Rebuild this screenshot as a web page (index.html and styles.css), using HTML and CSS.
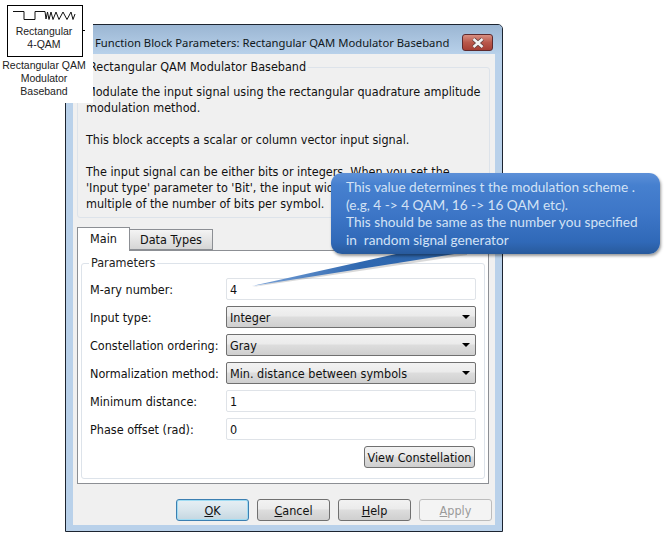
FILE: index.html
```html
<!DOCTYPE html>
<html lang="en">

<head>
    <meta charset="UTF-8">
    <title>Function Block Parameters</title>
    <link rel="stylesheet" href="styles.css">
</head>

<body>
    <div class="window">
        <div class="titlebar">
            <span class="title">Function Block Parameters: Rectangular QAM Modulator Baseband</span>
            <div class="close">
                <svg width="20" height="12" viewBox="0 0 20 12">
                    <path d="M5.5 2 L14.5 10 M14.5 2 L5.5 10" stroke="#5a3a3a" stroke-width="4" />
                    <path d="M5.5 2 L14.5 10 M14.5 2 L5.5 10" stroke="#f2f2f2" stroke-width="2.6" />
                </svg>
            </div>
        </div>

        <div class="client">
            <fieldset class="desc">
                <legend>Rectangular QAM Modulator Baseband</legend>
                <p>
                    Modulate the input signal using the rectangular quadrature amplitude<br>
                    modulation method.<br>
                    <br>
                    This block accepts a scalar or column vector input signal.<br>
                    <br>
                    The input signal can be either bits or integers. When you set the<br>
                    'Input type' parameter to 'Bit', the input width must be an integer<br>
                    multiple of the number of bits per symbol.
                </p>
            </fieldset>

            <div class="tabs">
                <div class="tab active">Main</div>
                <div class="tab">Data Types</div>
            </div>

            <div class="panel">
                <fieldset class="params">
                    <legend>Parameters</legend>
                    <div class="row">
                        <label>M-ary number:</label>
                        <div class="edit">4</div>
                    </div>
                    <div class="row">
                        <label>Input type:</label>
                        <div class="combo">Integer<i class="arrow"></i></div>
                    </div>
                    <div class="row">
                        <label>Constellation ordering:</label>
                        <div class="combo">Gray<i class="arrow"></i></div>
                    </div>
                    <div class="row">
                        <label>Normalization method:</label>
                        <div class="combo">Min. distance between symbols<i class="arrow"></i></div>
                    </div>
                    <div class="row">
                        <label>Minimum distance:</label>
                        <div class="edit">1</div>
                    </div>
                    <div class="row">
                        <label>Phase offset (rad):</label>
                        <div class="edit">0</div>
                    </div>
                    <div class="view-row">
                        <div class="btn view">View Constellation</div>
                    </div>
                </fieldset>
            </div>

            <div class="buttons">
                <div class="btn default"><u>O</u>K</div>
                <div class="btn"><u>C</u>ancel</div>
                <div class="btn"><u>H</u>elp</div>
                <div class="btn disabled"><u>A</u>pply</div>
            </div>
        </div>
    </div>

    <!-- block from the model, sits over the corner of the dialog -->
    <div class="block-area">
        <div class="block">
            <svg class="wave" width="64" height="14" viewBox="0 0 64 14">
                <path d="M0 2.5 H11 V10.5 H22 V2.5 H32 L33 10 L34.5 3 L36 10.5 L38 3 L40 10.5 L43 3 L46 10.5 L50 3 L54 10.5 L58 3 L60 10.5 L62 5" fill="none" stroke="#111" stroke-width="1" />
            </svg>
            <div class="block-text">Rectangular<br>4-QAM</div>
            <i class="stub"></i>
        </div>
        <div class="block-name">Rectangular QAM<br>Modulator<br>Baseband</div>
    </div>

    <!-- callout -->
    <svg class="tail" width="240" height="50" viewBox="0 0 240 50">
        <defs>
            <linearGradient id="tailfill" x1="0" y1="0" x2="1" y2="0">
                <stop offset="0" stop-color="#7ba3d8" />
                <stop offset="0.5" stop-color="#2f68b0" />
                <stop offset="1" stop-color="#2d66ad" />
            </linearGradient>
        </defs>
        <path d="M1 48 L216 16 V8 H154 V14 Z" fill="#000" opacity="0.15" />
        <path d="M1 47 L154 13 V5 H216 V13 Z" fill="url(#tailfill)" />
    </svg>
    <div class="callout">
        This value determines t the modulation scheme .<br>
        (e.g, 4 -&gt; 4 QAM, 16 -&gt; 16 QAM etc).<br>
        This should be same as the number you specified<br>
        in &nbsp;random signal generator
    </div>
</body>

</html>
```

FILE: styles.css
```css
body {
    margin: 0;
    width: 664px;
    height: 535px;
    background: #fff;
    font-family: "DejaVu Sans Condensed", "DejaVu Sans", sans-serif;
    font-stretch: condensed;
    font-size: 12.5px;
    color: #111;
    overflow: hidden;
}

/* dialog window */
.window {
    position: absolute;
    left: 65px;
    top: 24px;
    width: 438px;
    height: 508px;
    box-sizing: border-box;
    border: 1px solid #1c2430;
    border-radius: 5px 5px 0 0;
    background: #b9d1ea;
    display: flex;
    flex-direction: column;
}

.titlebar {
    height: 29px;
    box-sizing: border-box;
    flex: none;
    display: flex;
    align-items: center;
    justify-content: space-between;
    padding: 6px 9px 0 29px;
    background: linear-gradient(#9bb6d3, #b8d1ea);
    border-radius: 4px 4px 0 0;
}

.title {
    font-family: "Noto Sans", sans-serif;
    font-stretch: normal;
    font-size: 11.28px;
    white-space: nowrap;
    color: #101820;
}

.close {
    width: 31px;
    height: 17px;
    box-sizing: border-box;
    border: 1px solid #5e2a2e;
    border-radius: 3px;
    background: linear-gradient(#d98e80, #b9584b 50%, #a63e34);
    display: flex;
    align-items: center;
    justify-content: center;
}

.client {
    flex: 1;
    margin: 0 7px 6px;
    padding: 0 5px 0 4px;
    background: #f0f0f0;
    display: flex;
    flex-direction: column;
}

fieldset {
    margin: 0;
    border: 1px solid #dde3ea;
    border-radius: 3px;
}

legend {
    padding: 0 2px;
    line-height: 16px;
}

.desc {
    height: 159px;
    flex: none;
    box-sizing: border-box;
    margin-top: 5px;
    padding: 0 0 0 8px;
}

.desc legend {
    margin-left: 1px;
}

.desc p {
    margin: 9px 0 0;
    line-height: 16px;
    white-space: nowrap;
}

.tabs {
    display: flex;
    align-items: flex-end;
    height: 25px;
    margin-top: 7px;
    flex: none;
}

.tab {
    width: 83px;
    height: 21px;
    box-sizing: border-box;
    border: 1px solid #8c8f94;
    border-left: none;
    line-height: 19px;
    text-align: center;
    background: linear-gradient(#f4f4f4, #d5d5d5);
}

.tab.active {
    width: 53px;
    height: 24px;
    border-left: 1px solid #8c8f94;
    border-bottom: none;
    background: #fff;
    line-height: 22px;
    position: relative;
    z-index: 1;
    margin-bottom: -1px;
}

.panel {
    height: 234px;
    width: 412px;
    box-sizing: border-box;
    flex: none;
    border: 1px solid #8c8f94;
    background: #fff;
    padding: 4px 3px 3px;
}

.params {
    height: 224px;
    box-sizing: border-box;
    padding: 0 8px 0 8px;
    margin-top: 0;
}

.params legend {
    margin-left: -1px;
    color: #222;
}

.row {
    display: flex;
    align-items: center;
    height: 22px;
    margin-bottom: 6px;
}

.row:first-of-type {
    margin-top: 7px;
}

.row label {
    width: 136px;
    flex: none;
    white-space: nowrap;
}

.edit,
.combo {
    flex: 1;
    height: 22px;
    box-sizing: border-box;
    line-height: 21px;
    padding-left: 3px;
    border-radius: 2px;
}

.edit {
    border: 1px solid #dfe3e8;
    background: #fff;
}

.combo {
    position: relative;
    border: 1px solid #707070;
    background: linear-gradient(#f2f2f2 0, #ebebeb 45%, #dddddd 50%, #cfcfcf 100%);
}

.arrow {
    position: absolute;
    right: 5px;
    top: 8px;
    border-left: 4px solid transparent;
    border-right: 4px solid transparent;
    border-top: 4px solid #000;
}

.view-row {
    display: flex;
    justify-content: flex-end;
    margin-top: 5px;
    margin-right: 1px;
}

.btn {
    width: 73px;
    height: 22px;
    box-sizing: border-box;
    border: 1px solid #707070;
    border-radius: 3px;
    background: linear-gradient(#f2f2f2 0, #ebebeb 45%, #dddddd 50%, #cfcfcf 100%);
    line-height: 21px;
    text-align: center;
    white-space: nowrap;
}

.btn.view {
    width: 111px;
}

.btn.default {
    border: 1px solid #3c7fb1;
    box-shadow: inset 0 0 0 1px #9fdcf3;
    background: linear-gradient(#e6eff4, #d8e5ec 50%, #c4d6e0);
}

.btn.disabled {
    border-color: #bcbcbc;
    background: #f4f4f4;
    color: #9a9a9a;
}

.buttons {
    display: flex;
    justify-content: flex-end;
    gap: 8px;
    margin-top: 15px;
    margin-right: -2px;
}

/* simulink block */
.block-area {
    position: absolute;
    left: 0;
    top: 0;
    width: 93px;
    height: 103px;
    background: #fff;
    font-family: "Liberation Sans", Arial, sans-serif;
    font-stretch: normal;
    font-size: 10.5px;
    text-align: center;
    color: #222;
}

.block {
    position: absolute;
    left: 7px;
    top: 5px;
    width: 76px;
    height: 52px;
    box-sizing: border-box;
    border: 1px solid #000;
}

.wave {
    display: block;
    margin: 3px 0 0 5px;
}

.block-text {
    margin-top: 2px;
    padding-right: 2px;
    line-height: 13px;
}

.stub {
    position: absolute;
    right: -3px;
    top: 24px;
    width: 2px;
    height: 1px;
    background: #000;
}

.block-name {
    position: absolute;
    left: 0;
    top: 59px;
    width: 88px;
    line-height: 13px;
    white-space: nowrap;
}

/* callout over the dialog */
.callout {
    position: absolute;
    left: 331px;
    top: 173px;
    width: 329px;
    height: 81px;
    box-sizing: border-box;
    padding: 6px 0 0 15px;
    border-radius: 11px;
    background: linear-gradient(#5d90d8 0, #4680cf 15%, #3d76c7 50%, #3069b8 85%, #285a9c);
    box-shadow: 1px 2px 3px rgba(0, 0, 0, 0.4);
    font-family: Lato, "Open Sans", sans-serif;
    font-stretch: normal;
    font-size: 13.65px;
    line-height: 17.7px;
    color: #d3e2f5;
    white-space: nowrap;
}

.tail {
    position: absolute;
    left: 251px;
    top: 239px;
}
```
